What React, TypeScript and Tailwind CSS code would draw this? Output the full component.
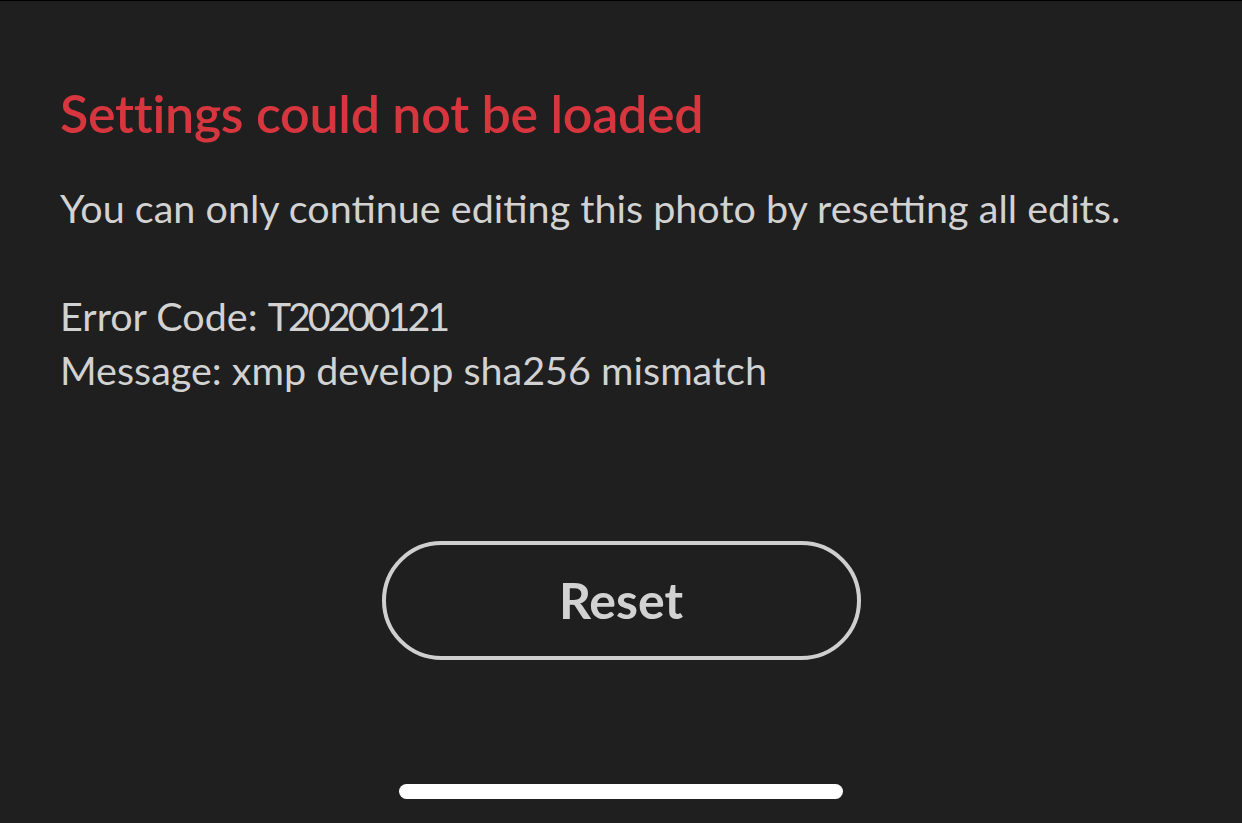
import React from "react";

const App = () => {
  return (
    <div
      className="flex h-[823px] w-[1242px] flex-col border-t border-black bg-[#1f1f1f] text-[#d2d2d2]"
      style={{ fontFamily: "Lato, 'Open Sans', sans-serif" }}
    >
      <div className="px-[60px] pt-[80px]">
        <h1 className="text-[52px] leading-[64px] font-semibold tracking-[-0.3px] text-[#d7363f]">
          Settings could not be loaded
        </h1>
        <p className="mt-[36px] text-[39.5px] leading-[54px]">
          You can only continue editing this photo by resetting all edits.
        </p>
        <div className="mt-[54px] text-[39.5px] leading-[54px]">
          <p>
            Error Code: <span className="tracking-[-3px]">T20200121</span>
          </p>
          <p>Message: xmp develop sha256 mismatch</p>
        </div>
      </div>

      <div className="mt-auto flex flex-col items-center pb-[24px]">
        <button className="flex h-[119px] w-[479px] items-center justify-center rounded-full border-4 border-[#cfcfcf] text-[50px] font-bold text-[#d2d2d2]">
          Reset
        </button>
        <div className="mt-[124px] h-[15px] w-[444px] rounded-full bg-white" />
      </div>
    </div>
  );
};

export default App;
